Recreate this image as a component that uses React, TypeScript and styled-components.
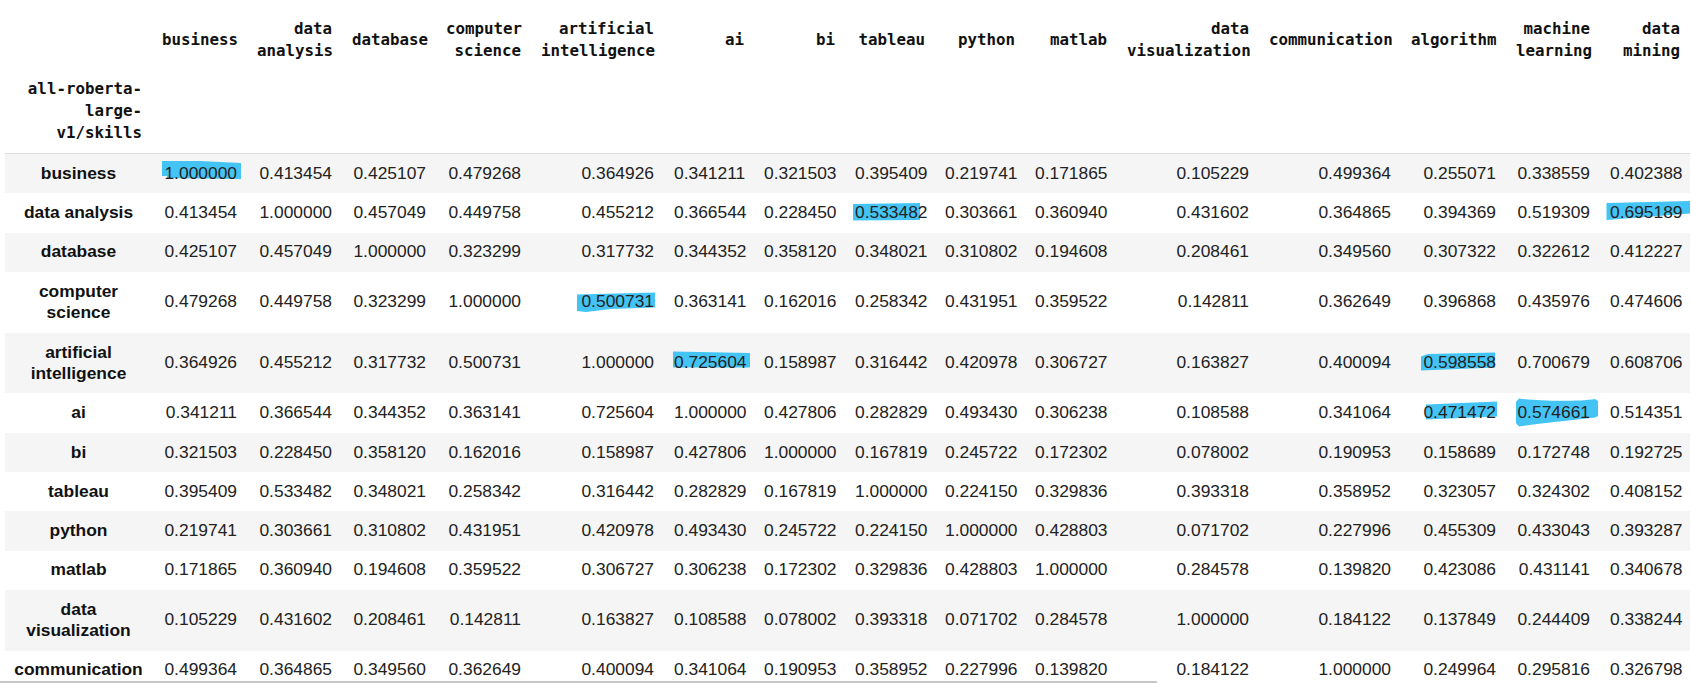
import React from "react";
import styled, { createGlobalStyle } from "styled-components";

const COLUMNS = [
  { label: "business", width: 95 },
  { label: "data analysis", width: 95 },
  { label: "database", width: 94 },
  { label: "computer science", width: 95 },
  { label: "artificial intelligence", width: 133 },
  { label: "ai", width: 90 },
  { label: "bi", width: 91 },
  { label: "tableau", width: 90 },
  { label: "python", width: 90 },
  { label: "matlab", width: 92 },
  { label: "data visualization", width: 142 },
  { label: "communication", width: 142 },
  { label: "algorithm", width: 105 },
  { label: "machine learning", width: 94 },
  { label: "data mining", width: 90 },
];

const ROWS: [string, string][] = [
  ["business", "1.000000 0.413454 0.425107 0.479268 0.364926 0.341211 0.321503 0.395409 0.219741 0.171865 0.105229 0.499364 0.255071 0.338559 0.402388"],
  ["data analysis", "0.413454 1.000000 0.457049 0.449758 0.455212 0.366544 0.228450 0.533482 0.303661 0.360940 0.431602 0.364865 0.394369 0.519309 0.695189"],
  ["database", "0.425107 0.457049 1.000000 0.323299 0.317732 0.344352 0.358120 0.348021 0.310802 0.194608 0.208461 0.349560 0.307322 0.322612 0.412227"],
  ["computer science", "0.479268 0.449758 0.323299 1.000000 0.500731 0.363141 0.162016 0.258342 0.431951 0.359522 0.142811 0.362649 0.396868 0.435976 0.474606"],
  ["artificial intelligence", "0.364926 0.455212 0.317732 0.500731 1.000000 0.725604 0.158987 0.316442 0.420978 0.306727 0.163827 0.400094 0.598558 0.700679 0.608706"],
  ["ai", "0.341211 0.366544 0.344352 0.363141 0.725604 1.000000 0.427806 0.282829 0.493430 0.306238 0.108588 0.341064 0.471472 0.574661 0.514351"],
  ["bi", "0.321503 0.228450 0.358120 0.162016 0.158987 0.427806 1.000000 0.167819 0.245722 0.172302 0.078002 0.190953 0.158689 0.172748 0.192725"],
  ["tableau", "0.395409 0.533482 0.348021 0.258342 0.316442 0.282829 0.167819 1.000000 0.224150 0.329836 0.393318 0.358952 0.323057 0.324302 0.408152"],
  ["python", "0.219741 0.303661 0.310802 0.431951 0.420978 0.493430 0.245722 0.224150 1.000000 0.428803 0.071702 0.227996 0.455309 0.433043 0.393287"],
  ["matlab", "0.171865 0.360940 0.194608 0.359522 0.306727 0.306238 0.172302 0.329836 0.428803 1.000000 0.284578 0.139820 0.423086 0.431141 0.340678"],
  ["data visualization", "0.105229 0.431602 0.208461 0.142811 0.163827 0.108588 0.078002 0.393318 0.071702 0.284578 1.000000 0.184122 0.137849 0.244409 0.338244"],
  ["communication", "0.499364 0.364865 0.349560 0.362649 0.400094 0.341064 0.190953 0.358952 0.227996 0.139820 0.184122 1.000000 0.249964 0.295816 0.326798"],
];

// Hand drawn marker strokes, keyed by "row,column".
// Path coordinates start at the number's left edge and vertical middle.
const MARKS: Record<string, string> = {
  "0,0": "M-2,-13 L36,-13 L77,-11 L77,5 L3,4 L3,2 L-2,2 Z",
  "1,7": "M-2,-9 L65,-10 L65,7 L-2,7.5 Z",
  "1,14": "M-3.5,-10 L80,-12 L80,0.5 L-3.5,7 Z",
  "3,4": "M-4,-7.5 L74,-9.5 L74,5.5 L30,7 L5,10 L-4,9 Z",
  "4,5": "M-1,-11.5 L76,-10 L76,4.5 L-1,4.5 Z",
  "4,12": "M-2,-6.5 L5,-9 L72,-10.5 L72,4.5 L-2,7.5 Z",
  "5,12": "M3,-8.5 L74,-11.5 L74,3.5 L3,6.5 Z",
  "5,13": "M2,-14.5 C20,-12 60,-11 78,-14 L81,-12 L81,3 L78,4.5 L20,11 L2,13.5 L-1,10 L-1,-11 Z",
};

const GlobalStyle = createGlobalStyle`
  html, body {
    margin: 0;
    background: #fff;
    overflow: hidden;
  }
`;

const ScrollWindow = styled.div`
  height: 681px;
  overflow: hidden;
  padding-left: 5px;
`;

const ScrollThumb = styled.div`
  width: 1157px;
  height: 2px;
  background: #c6c6c6;
`;

const Table = styled.table`
  border-collapse: collapse;
  table-layout: fixed;
  width: 1685px;
  color: #222;
  font-family: "Liberation Sans", Arial, sans-serif;
  font-size: 17.4px;
  line-height: 21.5px;
`;

const Col = styled.col<{ $width: number }>`
  width: ${(p) => p.$width}px;
`;

const Head = styled.thead`
  border-bottom: 1px solid #dcdcdc;
  color: #111;
  font-family: "DejaVu Sans Mono", "Liberation Mono", monospace;
  font-size: 15.8px;
  line-height: 22px;
`;

const LabelRow = styled.tr`
  height: 78px;
`;

const IndexNameRow = styled.tr`
  height: 75px;
`;

const ColumnLabel = styled.th`
  padding: 1px 10px 0;
  text-align: right;
  vertical-align: middle;
  font-weight: 700;
`;

const IndexName = styled.th`
  padding: 0 10px 9px;
  text-align: right;
  vertical-align: bottom;
  font-weight: 700;
`;

const Row = styled.tr<{ $striped: boolean }>`
  background: ${(p) => (p.$striped ? "#f5f5f5" : "#fff")};
`;

const RowLabel = styled.th`
  padding: 8.9px 8px;
  text-align: center;
  vertical-align: middle;
  font-weight: 700;
  color: #111;
`;

const Cell = styled.td`
  padding: 8.9px 10px;
  text-align: right;
  vertical-align: middle;
  white-space: nowrap;
`;

const MarkedValue = styled.span`
  position: relative;
  display: inline-block;
`;

const ValueText = styled.span`
  position: relative;
`;

const Marker = styled.svg`
  position: absolute;
  left: 0;
  top: 50%;
  width: 1px;
  height: 1px;
  overflow: visible;
  fill: #44c4f4;
`;

export default function App() {
  return (
    <>
      <GlobalStyle />
      <ScrollWindow>
        <Table>
          <colgroup>
            <Col $width={147} />
            {COLUMNS.map((c) => (
              <Col key={c.label} $width={c.width} />
            ))}
          </colgroup>
          <Head>
            <LabelRow>
              <ColumnLabel />
              {COLUMNS.map((c) => (
                <ColumnLabel key={c.label}>{c.label}</ColumnLabel>
              ))}
            </LabelRow>
            <IndexNameRow>
              <IndexName>
                all-roberta-
                <br />
                large-
                <br />
                v1/skills
              </IndexName>
              {COLUMNS.map((c) => (
                <IndexName key={c.label} />
              ))}
            </IndexNameRow>
          </Head>
          <tbody>
            {ROWS.map(([label, values], r) => (
              <Row key={label} $striped={r % 2 === 0}>
                <RowLabel>{label}</RowLabel>
                {values.split(" ").map((value, c) => {
                  const mark = MARKS[`${r},${c}`];
                  return (
                    <Cell key={c}>
                      {mark ? (
                        <MarkedValue>
                          <Marker>
                            <path d={mark} />
                          </Marker>
                          <ValueText>{value}</ValueText>
                        </MarkedValue>
                      ) : (
                        value
                      )}
                    </Cell>
                  );
                })}
              </Row>
            ))}
          </tbody>
        </Table>
      </ScrollWindow>
      <ScrollThumb />
    </>
  );
}
